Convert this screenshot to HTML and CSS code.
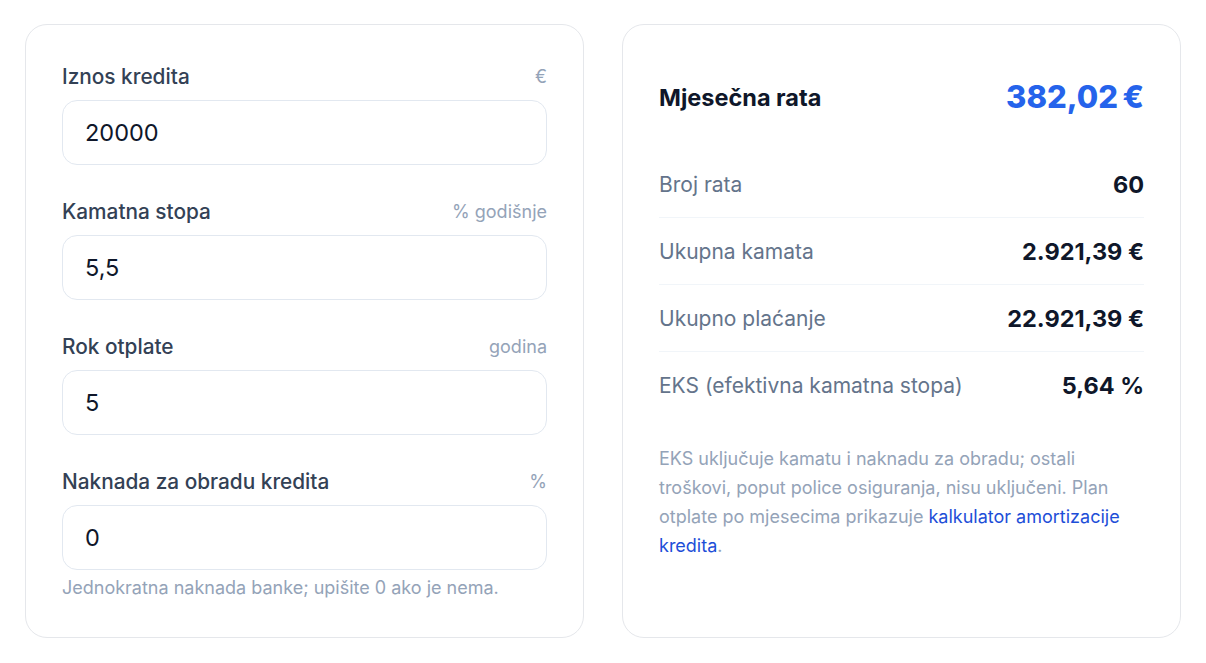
FILE: index.html
```html
<!DOCTYPE html>
<html lang="hr">
<head>
    <meta charset="UTF-8">
    <meta name="viewport" content="width=device-width, initial-scale=1.0">
    <title>Kreditni kalkulator</title>
    <link rel="stylesheet" href="styles.css">
</head>
<body>
    <div class="calculator">
        <div class="card form-card">
            <div class="field">
                <div class="field-head">
                    <label for="amount">Iznos kredita</label>
                    <span class="unit">€</span>
                </div>
                <input type="text" id="amount" value="20000">
            </div>
            <div class="field">
                <div class="field-head">
                    <label for="rate">Kamatna stopa</label>
                    <span class="unit">% godišnje</span>
                </div>
                <input type="text" id="rate" value="5,5">
            </div>
            <div class="field">
                <div class="field-head">
                    <label for="term">Rok otplate</label>
                    <span class="unit">godina</span>
                </div>
                <input type="text" id="term" value="5">
            </div>
            <div class="field">
                <div class="field-head">
                    <label for="fee">Naknada za obradu kredita</label>
                    <span class="unit">%</span>
                </div>
                <input type="text" id="fee" value="0">
                <p class="hint">Jednokratna naknada banke; upišite 0 ako je nema.</p>
            </div>
        </div>

        <div class="card result-card">
            <div class="result-head">
                <h2>Mjesečna rata</h2>
                <span class="monthly">382,02&#8239;€</span>
            </div>
            <div class="result-row">
                <span class="row-label">Broj rata</span>
                <span class="row-value">60</span>
            </div>
            <div class="result-row">
                <span class="row-label">Ukupna kamata</span>
                <span class="row-value">2.921,39 €</span>
            </div>
            <div class="result-row">
                <span class="row-label">Ukupno plaćanje</span>
                <span class="row-value">22.921,39 €</span>
            </div>
            <div class="result-row">
                <span class="row-label">EKS (efektivna kamatna stopa)</span>
                <span class="row-value">5,64 %</span>
            </div>
            <p class="note">
                EKS uključuje kamatu i naknadu za obradu; ostali troškovi, poput police osiguranja, nisu uključeni. Plan otplate po mjesecima prikazuje <a href="#">kalkulator amortizacije kredita</a>.
            </p>
        </div>
    </div>
</body>
</html>
```

FILE: styles.css
```css
* {
    margin: 0;
    padding: 0;
    box-sizing: border-box;
    font-family: 'Inter', 'Noto Sans', sans-serif;
}

body {
    background: #ffffff;
    padding: 24px 25px;
}

.calculator {
    display: grid;
    grid-template-columns: 1fr 1fr;
    gap: 38px;
}

.card {
    background: #ffffff;
    border: 1.5px solid #e5e7eb;
    border-radius: 22px;
    padding: 37px 36px;
}

/* form */

.field {
    margin-bottom: 32px;
}

.field:last-child {
    margin-bottom: 0;
}

.field-head {
    display: flex;
    justify-content: space-between;
    align-items: center;
    height: 28px;
    margin-bottom: 10px;
}

.field-head label {
    font-size: 20.8px;
    font-weight: 500;
    color: #334155;
}

.unit {
    font-size: 18px;
    color: #94a3b8;
}

input {
    width: 100%;
    height: 65px;
    padding: 0 22px;
    border: 1.5px solid #e2e8f0;
    border-radius: 15px;
    font-size: 23.5px;
    color: #0f172a;
    background: #ffffff;
    outline: none;
}

.hint {
    margin-top: 6px;
    font-size: 18px;
    line-height: 24px;
    color: #94a3b8;
}

/* results */

.result-card {
    padding-top: 36px;
}

.result-head {
    display: flex;
    justify-content: space-between;
    align-items: center;
    padding: 16px 0 18px;
    margin-bottom: 16px;
}

.result-head h2 {
    font-size: 23.5px;
    font-weight: 700;
    color: #0f172a;
}

.monthly {
    font-size: 31px;
    line-height: 40px;
    font-weight: 800;
    letter-spacing: -0.8px;
    color: #2563eb;
}

.result-row {
    display: flex;
    justify-content: space-between;
    align-items: center;
    height: 67px;
    border-bottom: 1px solid #f1f5f9;
}

.result-row:last-of-type {
    border-bottom: none;
}

.row-label {
    font-size: 21px;
    color: #64748b;
}

.row-value {
    font-size: 23.5px;
    font-weight: 700;
    color: #0f172a;
}

.note {
    margin-top: 25px;
    font-size: 18px;
    line-height: 29px;
    color: #94a3b8;
}

.note a {
    color: #1d4ed8;
    text-decoration: none;
}
```
